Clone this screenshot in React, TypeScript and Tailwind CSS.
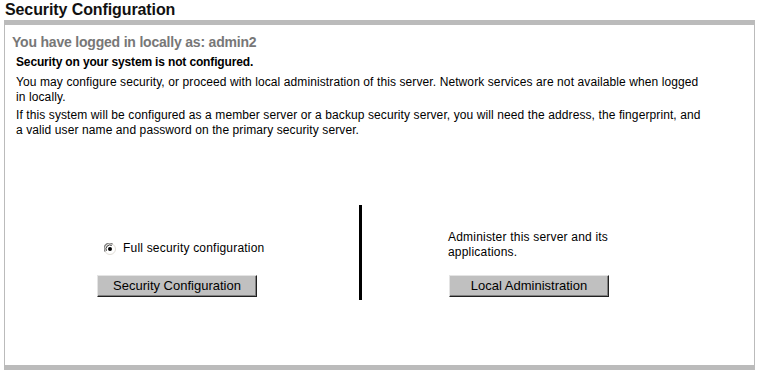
export default function App() {
  return (
    <div className="w-[760px] h-[374px] bg-white font-['Liberation_Sans',Arial,sans-serif] text-black">
      <h1 className="pl-[5px] text-[16px] leading-[20px] font-bold text-[#111] tracking-[-0.1px]">Security Configuration</h1>

      <div className="ml-[4px] w-[751px] h-[350px] border-x border-t-[5px] border-b-[5px] border-[#bbbbbb] flex flex-col">
        <div className="pt-[9px] pl-[7px] text-[14px] leading-[16px] font-bold text-[#777777] tracking-[-0.2px]">
          You have logged in locally as: admin2
        </div>

        <div className="pl-[11px] w-[740px] text-[12px] leading-[15px] tracking-[0.1px]">
          <p className="mt-[5px] font-bold tracking-[-0.15px]">Security on your system is not configured.</p>
          <p className="mt-[5px]">
            You may configure security, or proceed with local administration of this server. Network services are not
            available when logged
            <br />
            in locally.
          </p>
          <p className="mt-[3px]">
            If this system will be configured as a member server or a backup security server, you will need the
            address, the fingerprint, and
            <br />
            a valid user name and password on the primary security server.
          </p>
        </div>

        <div className="mt-[67px] flex h-[95px] text-[12px] leading-[15px] tracking-[0.2px]">
          <div className="w-[344px] pl-[92px] flex flex-col justify-end items-start">
            <label className="ml-[7px] mb-[19px] flex items-center gap-[7px]">
              <RadioMark />
              <span>Full security configuration</span>
            </label>
            <ClassicButton>Security Configuration</ClassicButton>
          </div>

          <div className="ml-[10px] w-[3px] h-[95px] bg-black" />

          <div className="pl-[86px] flex flex-col justify-end items-start">
            <p className="mb-[15px] w-[175px]">
              Administer this server and its
              <br />
              applications.
            </p>
            <div className="pl-[1px]">
              <ClassicButton>Local Administration</ClassicButton>
            </div>
          </div>
        </div>
      </div>
    </div>
  );
}

function RadioMark() {
  return (
    <svg width="12" height="12" viewBox="0 0 12 12">
      <circle cx="6" cy="6" r="5.5" fill="#ffffff" stroke="#e0ddd6" />
      <path d="M1.2 8.6 A5.3 5.3 0 0 1 8.6 1.2" fill="none" stroke="#808080" strokeWidth="1.2" />
      <path d="M2.4 7.8 A4 4 0 0 1 7.8 2.4" fill="none" stroke="#303030" strokeWidth="1" />
      <circle cx="6" cy="6" r="2" fill="#000000" />
    </svg>
  );
}

function ClassicButton({ children }: { children: React.ReactNode }) {
  return (
    <button
      type="button"
      className="mb-[3px] w-[160px] h-[22px] bg-[#c0c0c0] text-[13px] leading-[16px] tracking-normal text-black border border-t-[#e4e4e4] border-l-[#e4e4e4] border-b-[#202020] border-r-[#202020] shadow-[inset_-1px_-1px_0_#808080] font-['Liberation_Sans',Arial,sans-serif]"
    >
      {children}
    </button>
  );
}
